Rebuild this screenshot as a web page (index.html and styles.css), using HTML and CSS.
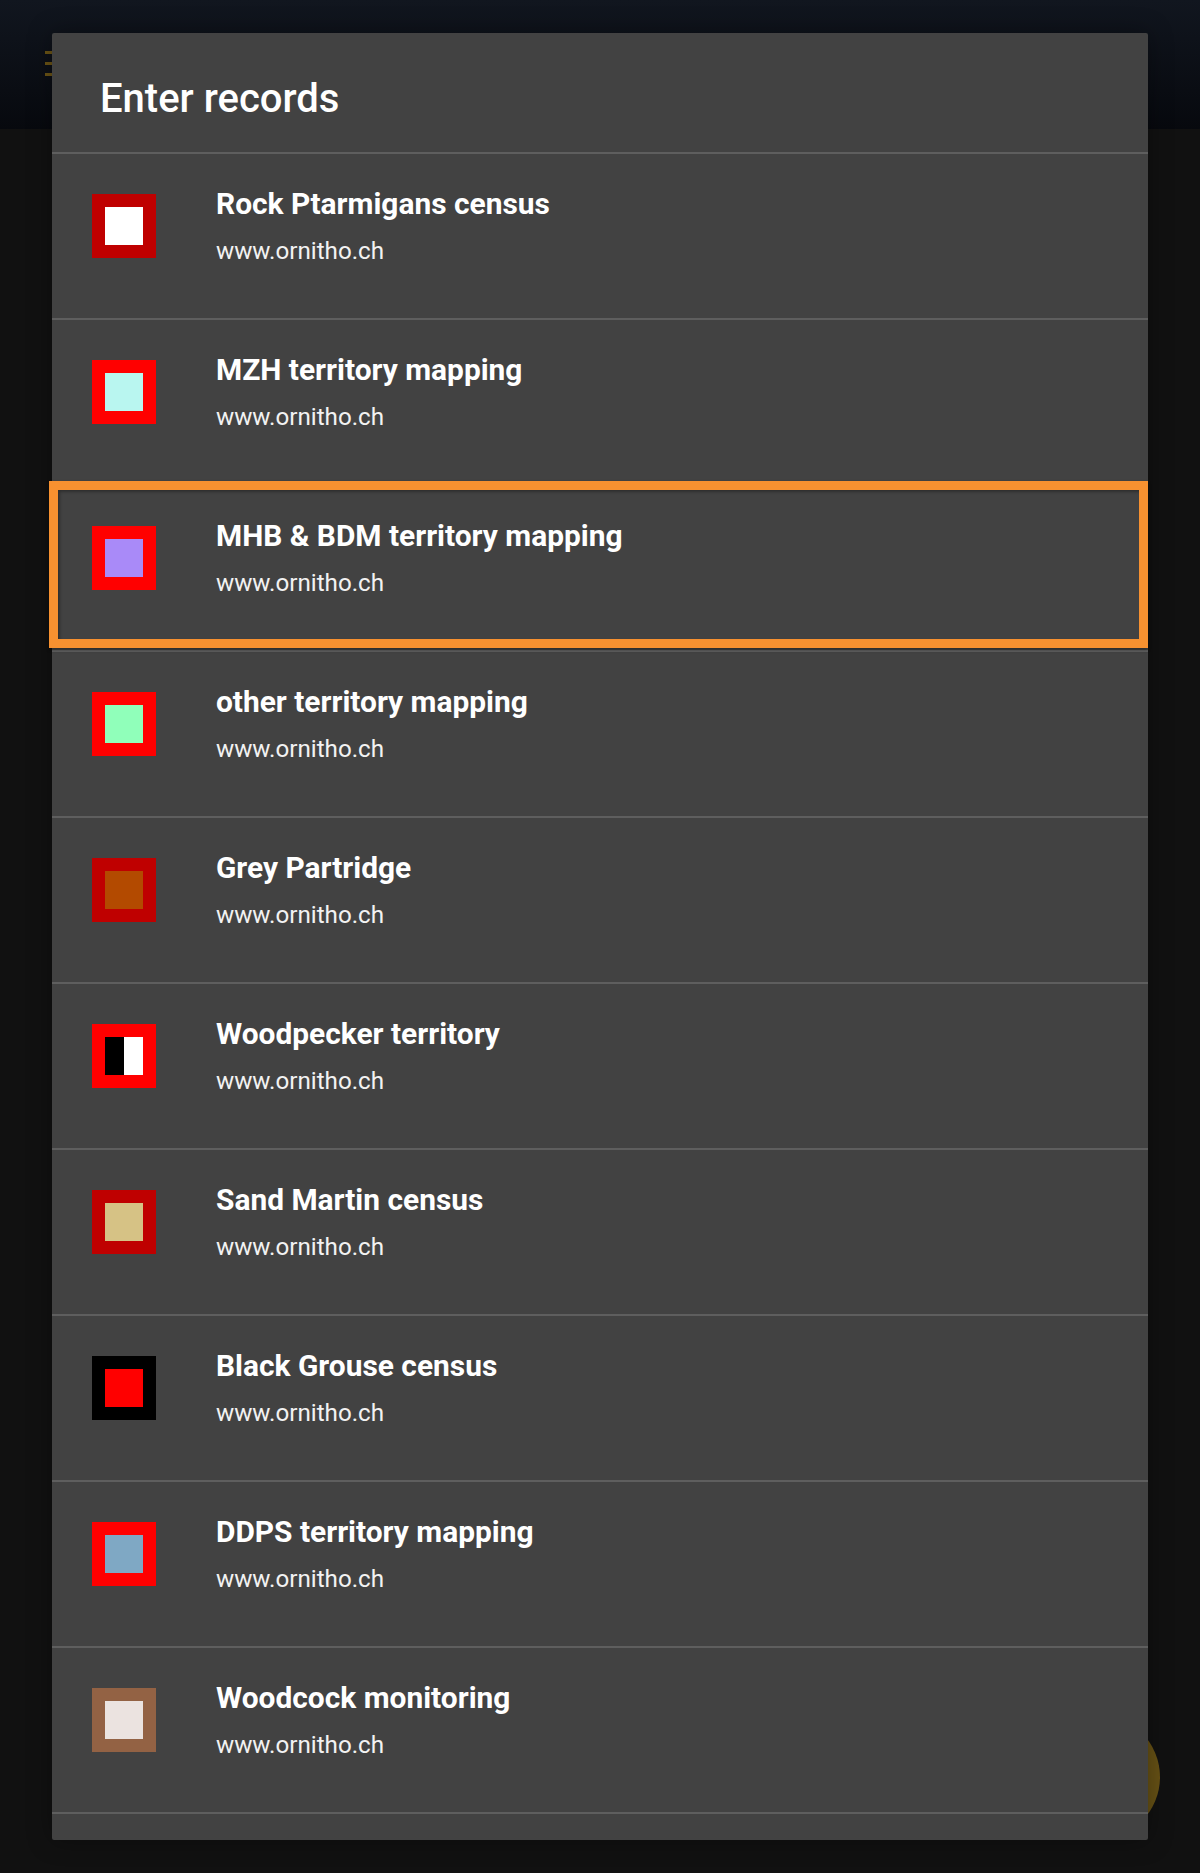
FILE: index.html
```html
<!DOCTYPE html>
<html lang="en">
<head>
  <meta charset="UTF-8">
  <title>Enter records</title>
  <link rel="stylesheet" href="styles.css">
</head>
<body>
  <div class="appbar">
    <div class="menu-icon"><span></span><span></span><span></span></div>
  </div>
  <div class="fab"></div>

  <div class="dialog">
    <h2>Enter records</h2>
    <div class="list">
      <div class="row">
        <div class="icon dark-red"><div class="swatch" style="background: #ffffff"></div></div>
        <div class="text"><h3>Rock Ptarmigans census</h3><p>www.ornitho.ch</p></div>
      </div>
      <div class="row">
        <div class="icon red"><div class="swatch" style="background: #b9f6f0"></div></div>
        <div class="text"><h3>MZH territory mapping</h3><p>www.ornitho.ch</p></div>
      </div>
      <div class="row selected">
        <div class="icon red"><div class="swatch" style="background: #a98af8"></div></div>
        <div class="text"><h3>MHB &amp; BDM territory mapping</h3><p>www.ornitho.ch</p></div>
      </div>
      <div class="row">
        <div class="icon red"><div class="swatch" style="background: #90ffba"></div></div>
        <div class="text"><h3>other territory mapping</h3><p>www.ornitho.ch</p></div>
      </div>
      <div class="row">
        <div class="icon dark-red"><div class="swatch" style="background: #b34a00"></div></div>
        <div class="text"><h3>Grey Partridge</h3><p>www.ornitho.ch</p></div>
      </div>
      <div class="row">
        <div class="icon red"><div class="swatch half"></div></div>
        <div class="text"><h3>Woodpecker territory</h3><p>www.ornitho.ch</p></div>
      </div>
      <div class="row">
        <div class="icon dark-red"><div class="swatch" style="background: #d6c285"></div></div>
        <div class="text"><h3>Sand Martin census</h3><p>www.ornitho.ch</p></div>
      </div>
      <div class="row">
        <div class="icon black"><div class="swatch" style="background: #ff0000"></div></div>
        <div class="text"><h3>Black Grouse census</h3><p>www.ornitho.ch</p></div>
      </div>
      <div class="row">
        <div class="icon red"><div class="swatch" style="background: #7fa8c4"></div></div>
        <div class="text"><h3>DDPS territory mapping</h3><p>www.ornitho.ch</p></div>
      </div>
      <div class="row">
        <div class="icon brown"><div class="swatch" style="background: #ebe3e0"></div></div>
        <div class="text"><h3>Woodcock monitoring</h3><p>www.ornitho.ch</p></div>
      </div>
    </div>
  </div>
</body>
</html>
```

FILE: styles.css
```css
html, body {
  margin: 0;
  height: 100%;
}
body {
  position: relative;
  height: 1873px;
  overflow: hidden;
  background: #111111;
  font-family: Roboto, "Liberation Sans", sans-serif;
  color: #ffffff;
}
.appbar {
  height: 129px;
  background: linear-gradient(#11161f, #07090e);
  padding-top: 51px;
  box-sizing: border-box;
}
.menu-icon {
  margin-left: 45px;
  width: 30px;
  display: flex;
  flex-direction: column;
  gap: 8px;
}
.menu-icon span {
  height: 3px;
  background: #6b5415;
}
.fab {
  position: absolute;
  left: 1034px;
  top: 1714px;
  width: 126px;
  height: 126px;
  border-radius: 50%;
  background: #665115;
}
.dialog {
  position: absolute;
  left: 52px;
  top: 33px;
  width: 1096px;
  height: 1807px;
  background: #424242;
  border-radius: 2px;
  box-shadow: 0 0 24px rgba(0, 0, 0, 0.35);
}
.dialog h2 {
  margin: 0;
  height: 121px;
  padding: 42px 0 0 48px;
  box-sizing: border-box;
  font-size: 40px;
  line-height: 48px;
  font-weight: 500;
  border-bottom: 2px solid #5e5e5e;
}
.row {
  height: 166px;
  box-sizing: border-box;
  display: flex;
  padding: 40px 0 0 40px;
  border-bottom: 2px solid #5e5e5e;
}
.row.selected {
  position: relative;
}
.row.selected::after {
  content: "";
  position: absolute;
  left: -3px;
  top: -5px;
  right: 0;
  bottom: 2px;
  border: 9px solid #f79130;
  box-shadow: 0 2px 3px rgba(0, 0, 0, 0.35), inset 2px 2px 3px rgba(0, 0, 0, 0.3);
}
.icon {
  width: 64px;
  height: 64px;
  display: flex;
  align-items: center;
  justify-content: center;
  flex-shrink: 0;
}
.swatch {
  width: 38px;
  height: 38px;
}
.swatch.half {
  background: linear-gradient(90deg, #000000 50%, #ffffff 50%);
}
.red { background: #ff0000; }
.dark-red { background: #bf0000; }
.black { background: #000000; }
.brown { background: #936244; }
.text {
  margin-left: 60px;
  margin-top: -9px;
}
.text h3 {
  margin: 0;
  font-size: 29.9px;
  line-height: 38px;
  font-weight: 700;
}
.text p {
  margin: 9px 0 0;
  font-size: 24.2px;
  line-height: 38px;
  color: #f2f2f2;
}
```
